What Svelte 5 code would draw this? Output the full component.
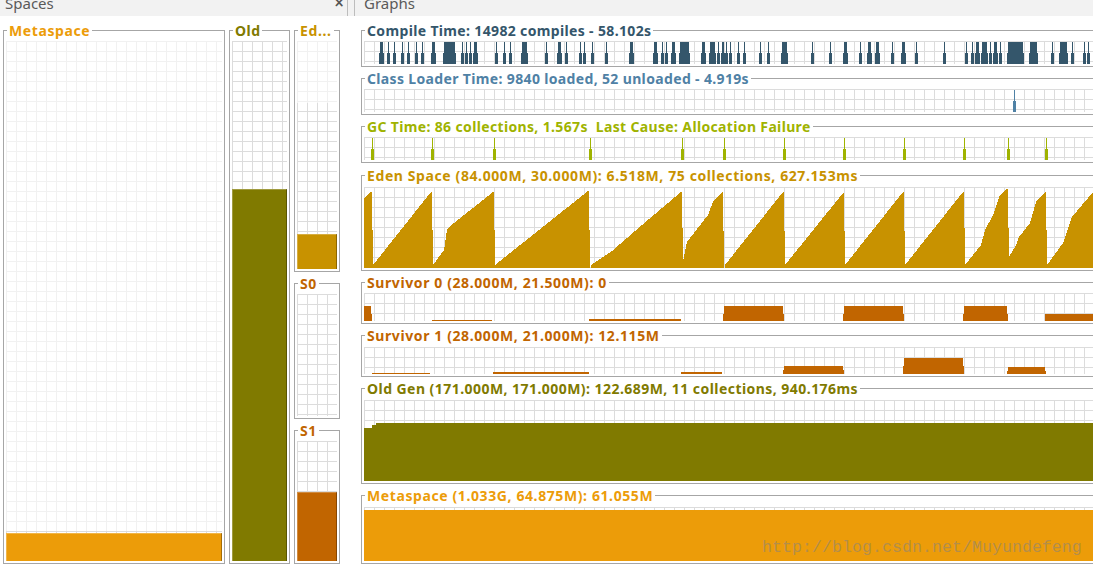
<script>
  // compile bars as [from, to] in page x, upper part is narrower than the lower part
  const compileBars = [
    [379,384],[387,390],[393,396],[401,404],[407,410],[415,418],[421,424],[431,436],[443,456],
    [461,464],[465,468],[469,472],[473,478],[495,498],[503,506],[509,512],[521,528],[545,548],
    [557,562],[565,568],[579,582],[583,586],[591,594],[605,608],[629,634],[653,658],[661,664],
    [665,668],[671,676],[679,690],[701,706],[709,716],[717,720],[721,725],[725,728],[729,732],
    [737,740],[743,746],[759,762],[767,770],[781,788],[811,814],[829,832],[843,848],[859,862],
    [867,872],[875,880],[891,894],[901,906],[915,918],[943,946],[965,968],[971,974],[975,980],
    [981,988],[989,992],[993,998],[999,1002],[1007,1024],[1029,1038],[1051,1054],[1059,1068],
    [1071,1074],[1083,1086],[1087,1090]
  ];
  const gcBars = [371,431,493,589,681,723,783,843,903,963,1007,1045].map((x) => [x, x + 3]);

  function spikes(bars, top, mid, bottom) {
    const out = [];
    for (const [a, b] of bars) {
      out.push([a, mid, b - a, bottom - mid]);
      out.push([a + 1, top, b - a - 2, mid - top]);
    }
    return out;
  }

  // points along the top edge of a saw tooth, closed along the plot bottom
  function area(points, bottom) {
    const first = points[0][0];
    const last = points[points.length - 1][0];
    return [[first, bottom], ...points, [last, bottom]].map((p) => p.join(',')).join(' ');
  }

  const edenTeeth = [
    [[364,198],[371,192],[372,192],[372,230],[373,230]],
    [[373,265],[431,192],[432,192],[432,230],[433,230]],
    [[433,265],[444,250],[447,230],[449,227],[493,192],[494,192],[494,230],[495,230]],
    [[495,265],[588,191],[589,191],[589,230],[590,230]],
    [[591,265],[612,251],[642,225],[681,192],[682,192],[682,228],[683,228]],
    [[683,262],[685,252],[687,242],[708,215],[713,202],[722,192],[723,192],[723,231],[724,231]],
    [[725,265],[783,192],[784,192],[784,231],[785,231]],
    [[785,265],[843,193],[844,193],[844,231],[845,231]],
    [[845,265],[903,192],[904,192],[904,231],[905,231]],
    [[905,265],[963,192],[964,192],[964,228],[965,228]],
    [[965,265],[981,245],[985,230],[993,215],[1000,195],[1007,189],[1008,189],[1008,228],[1009,228]],
    [[1009,257],[1016,245],[1019,237],[1030,223],[1036,202],[1045,192],[1046,192],[1046,230],[1047,230]],
    [[1047,265],[1063,243],[1072,217],[1093,192]]
  ];

  // blocks with a 1px lower shoulder on both sides
  function block(a, b, top, shoulder, bottom) {
    return area([[a,shoulder],[a + 1,shoulder],[a + 1,top],[b - 1,top],[b - 1,shoulder],[b,shoulder]], bottom);
  }

  const rows = [
    { key: 'compile', title: 'Compile Time: 14982 compiles - 58.102s', gap: 4, pad: 4, top: 41, h: 23,
      rects: spikes(compileBars, 42, 53, 64) },
    { key: 'loader', title: 'Class Loader Time: 9840 loaded, 52 unloaded - 4.919s', gap: 4, pad: 4, top: 89, h: 23,
      rects: spikes([[1013,1016]], 90, 101, 112) },
    { key: 'gc', title: 'GC Time: 86 collections, 1.567s  Last Cause: Allocation Failure', gap: 4, pad: 4, top: 137, h: 23,
      rects: spikes(gcBars, 138, 149, 160) },
    { key: 'eden', title: 'Eden Space (84.000M, 30.000M): 6.518M, 75 collections, 627.153ms', gap: 5, pad: 5, top: 187, h: 81,
      polys: edenTeeth.map((t) => area(t, 268)) },
    { key: 'survivor', title: 'Survivor 0 (28.000M, 21.500M): 0', gap: 4, pad: 4, top: 293, h: 28,
      polys: [
        area([[364,306],[371,306],[371,314],[372,314]], 321),
        area([[432,320],[492,320]], 321),
        area([[589,319],[681,319]], 321),
        block(723, 784, 306, 314, 321),
        block(843, 904, 306, 314, 321),
        block(963, 1008, 306, 314, 321),
        area([[1045,314],[1093,314]], 321)
      ] },
    { key: 'survivor', title: 'Survivor 1 (28.000M, 21.000M): 12.115M', gap: 4, pad: 5, top: 347, h: 27,
      polys: [
        area([[372,373],[430,373]], 374),
        area([[493,372],[589,372]], 374),
        area([[681,372],[722,372]], 374),
        block(783, 844, 366, 370, 374),
        block(903, 964, 358, 366, 374),
        block(1007, 1046, 367, 371, 374)
      ] },
    { key: 'old', title: 'Old Gen (171.000M, 171.000M): 122.689M, 11 collections, 940.176ms', gap: 4, pad: 5, top: 400, h: 81,
      polys: [area([[364,428],[372,428],[372,425],[376,425],[376,423],[1093,423]], 481)] },
    { key: 'meta', title: 'Metaspace (1.033G, 64.875M): 61.055M', gap: 4, pad: 5, top: 507, h: 54,
      polys: [area([[364,510],[1093,510]], 561)] }
  ];
</script>

{#snippet space(key, title, h, fill, unused, kind)}
  <fieldset class="panel {key} {kind}">
    <legend>{title}</legend>
    <div class="plot column" style="height: {h}px">
      <div class="unused" style="height: {unused}px"></div>
      <div class="fill" style="height: {fill}px"></div>
    </div>
  </fieldset>
{/snippet}

<div class="app">
  <div class="tabs">
    <div class="tab spaces">
      <span>Spaces</span>
      <span class="close">×</span>
    </div>
    <div class="tab graphs">
      <span>Graphs</span>
    </div>
  </div>

  <div class="main">
    <div class="spaces-view">
      {@render space('meta', 'Metaspace', 520, 28, 490, 'wide')}
      {@render space('old', 'Old', 520, 372, 0, 'mid')}
      <div class="stack">
        {@render space('eden', 'Ed...', 228, 35, 62, 'thin')}
        {@render space('empty', 'S0', 122, 0, 0, 'thin')}
        {@render space('survivor', 'S1', 120, 69, 0, 'thin')}
      </div>
    </div>

    <div class="graphs-view">
      {#each rows as row}
        <fieldset class="panel graph {row.key}" style="margin-top: {row.gap}px; padding-top: {row.pad}px">
          <legend>{row.title}</legend>
          <div class="plot" style="height: {row.h}px">
            <svg width="760" height={row.h} viewBox="364 {row.top} 760 {row.h}" shape-rendering="crispEdges">
              {#each row.rects ?? [] as [x, y, w, h]}
                <rect {x} {y} width={w} height={h} />
              {/each}
              {#each row.polys ?? [] as points}
                <polygon {points} />
              {/each}
            </svg>
          </div>
        </fieldset>
      {/each}
    </div>
  </div>

  <div class="watermark">http://blog.csdn.net/Muyundefeng</div>
</div>

<style>
  :global(body) {
    background: #fff;
    overflow: hidden;
  }

  .app {
    position: relative;
    width: 1093px;
    height: 568px;
    overflow: hidden;
    font-family: "Noto Sans", sans-serif;
  }

  .tabs {
    display: flex;
    height: 16px;
    background: #f2f2f2;
    color: #5a5a5a;
    font-size: 15px;
  }

  .tab {
    display: flex;
    justify-content: space-between;
    line-height: 10px;
    height: 16px;
    overflow: hidden;
  }

  .tab span {
    margin-top: -2px;
  }

  .spaces {
    width: 342px;
    padding: 0 0 0 5px;
    border-right: 1px solid #bdbdbd;
  }

  .close {
    margin-right: 3px;
    font-size: 17px;
    font-weight: 600;
    color: #555;
  }

  .graphs {
    margin-left: 6px;
    padding-left: 9px;
    border-left: 1px solid #bdbdbd;
  }

  .main {
    display: flex;
    padding: 7px 0 0 3px;
  }

  .spaces-view {
    display: flex;
    gap: 4px;
    align-items: flex-start;
  }

  .stack {
    display: flex;
    flex-direction: column;
    gap: 4px;
  }

  .graphs-view {
    width: 760px;
    margin-left: 21px;
    margin-top: -4px;
  }

  fieldset.panel {
    margin: 0;
    padding: 4px 2px 2px;
    border: 1px solid #a6a6a6;
    min-width: 0;
    box-sizing: border-box;
  }

  .graph {
    width: 770px;
    color: inherit;
  }

  .wide { width: 222px; }
  .mid { width: 61px; }
  .thin { width: 46px; }

  legend {
    box-sizing: border-box;
    height: 14px;
    margin-left: 1px;
    padding: 1px 2px 0;
    font-size: 14px;
    font-weight: 700;
    letter-spacing: 0.45px;
    line-height: 14px;
    white-space: pre;
  }

  .compile legend,
  .loader legend,
  .gc legend { letter-spacing: 0.35px; }

  .eden legend,
  .survivor legend,
  .meta legend { letter-spacing: 0.6px; }

  .plot {
    background-color: #fff;
    background-image:
      linear-gradient(#dcdcdc 1px, transparent 1px),
      linear-gradient(90deg, #dcdcdc 1px, transparent 1px);
    background-size: 10px 10px;
    box-sizing: border-box;
  }

  .column {
    display: flex;
    flex-direction: column;
    justify-content: space-between;
    box-sizing: content-box;
  }

  .unused {
    background: rgba(255, 255, 255, 0.6);
  }

  .fill {
    background: currentColor;
    box-shadow: inset -1px 0 rgba(0, 0, 0, 0.3), inset 1px 1px rgba(255, 255, 255, 0.25);
  }

  svg {
    display: block;
    fill: currentColor;
  }

  .compile { color: #34566b; }
  .loader { color: #4f81a5; }
  .gc { color: #9fb300; }
  .eden { color: #c89200; }
  .survivor { color: #c16500; }
  .empty { color: #c16500; }
  .old { color: #807a00; }
  .meta { color: #ec9c09; }

  .watermark {
    position: absolute;
    left: 762px;
    top: 539px;
    font-family: "Liberation Mono", monospace;
    font-size: 16.67px;
    line-height: 18px;
    color: rgba(130, 130, 130, 0.55);
  }
</style>
